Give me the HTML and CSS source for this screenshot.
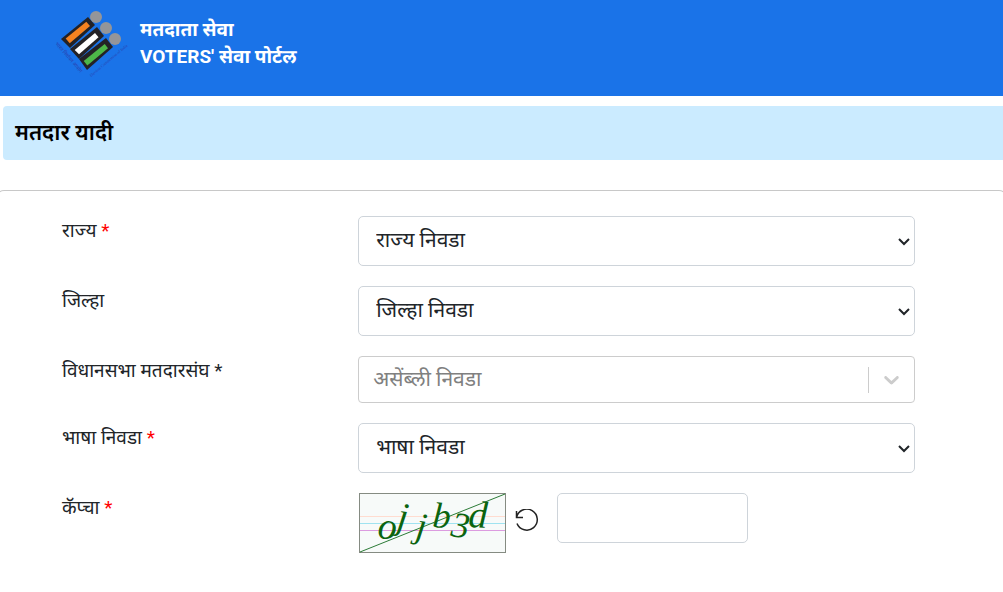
FILE: index.html
```
<!DOCTYPE html>
<html lang="mr">
<head>
  <meta charset="UTF-8" />
  <meta name="viewport" content="width=device-width, initial-scale=1.0"/>
  <title>मतदार यादी</title>
  <link rel="stylesheet" href="styles.css">
</head>
<body>
  <header class="header">
    <svg class="logo" viewBox="0 0 75 72" aria-hidden="true">
      <g fill="#949599">
        <circle cx="42" cy="9" r="6"/>
        <circle cx="52" cy="20" r="6"/>
        <circle cx="61" cy="31" r="6"/>
      </g>
      <g fill="#242226">
        <path d="M7 31 34 9 41 17 16 40Z"/>
        <path d="M16 41 43 19 50 28 25 51Z"/>
        <path d="M25 51 52 30 59 39 33 62Z"/>
      </g>
      <path fill="#f58220" d="M11.700 30.500 32.300 13.700 36 18 15.700 35.300Z"/>
      <path fill="#ffffff" d="M20.700 42 41 25 44.500 29.300 25 46.300Z"/>
      <path fill="#4db748" d="M29.700 53 50.700 36 54 40.300 33.300 57.500Z"/>
      <g class="logo-text">
        <text class="logo-hindi" transform="translate(1 36) rotate(49)">भारत निर्वाचन आयोग</text>
        <text transform="translate(37 69) rotate(-40)">Election Commission of India</text>
      </g>
    </svg>
    <div class="brand">
      <div>मतदाता सेवा</div>
      <div>VOTERS' सेवा पोर्टल</div>
    </div>
  </header>

  <h1 class="page-title">मतदार यादी</h1>

  <form class="panel">
    <div class="row">
      <label for="state">राज्य <span class="required">*</span></label>
      <select class="control" id="state"><option>राज्य निवडा</option></select>
    </div>
    <div class="row">
      <label for="district">जिल्हा</label>
      <select class="control" id="district"><option>जिल्हा निवडा</option></select>
    </div>
    <div class="row">
      <label for="assembly">विधानसभा मतदारसंघ *</label>
      <div class="combo">
        <input class="combo-input" type="text" id="assembly" placeholder="असेंब्ली निवडा">
        <button class="combo-toggle" type="button" aria-label="असेंब्ली निवडा">
          <svg width="25" height="25" viewBox="0 0 20 20"><path d="M4.516 7.548c0.436-0.446 1.043-0.481 1.576 0l3.908 3.747 3.908-3.747c0.533-0.481 1.141-0.446 1.574 0 0.436 0.445 0.408 1.197 0 1.615-0.406 0.418-4.695 4.502-4.695 4.502-0.217 0.223-0.502 0.335-0.787 0.335s-0.57-0.112-0.789-0.335c0 0-4.287-4.084-4.695-4.502s-0.436-1.17 0-1.615z"/></svg>
        </button>
      </div>
    </div>
    <div class="row">
      <label for="language">भाषा निवडा <span class="required">*</span></label>
      <select class="control" id="language"><option>भाषा निवडा</option></select>
    </div>
    <div class="row">
      <label for="captcha">कॅप्चा <span class="required">*</span></label>
      <div class="captcha">
        <svg class="captcha-image" viewBox="0 0 147 60" role="img" aria-label="captcha">
          <rect x=".5" y=".5" width="146" height="59" fill="#f7faf9" stroke="#858b82"/>
          <path d="M1 23.500H146" stroke="#ffdcd0"/>
          <path d="M1 30.500H146" stroke="#9fe3f0"/>
          <path d="M1 37.500H146" stroke="#dc9be0"/>
          <path d="M1 59 146 1" stroke="#2b7a36"/>
          <g class="captcha-text">
            <text class="captcha-big" transform="translate(18 45) rotate(5)">o</text>
            <text class="captcha-big" transform="translate(37 35) rotate(8)">j</text>
            <text transform="translate(56 44) rotate(8)">j</text>
            <text transform="translate(73 34) rotate(4)">b</text>
            <text transform="translate(91 43) rotate(8)">3</text>
            <text class="captcha-big" transform="translate(109 34) rotate(3)">d</text>
          </g>
        </svg>
        <button class="refresh" type="button" aria-label="Refresh captcha">
          <svg width="24" height="24" viewBox="0 0 24 24"><path d="M1.500 2V8.500H8M1.500 8.500A10.500 10.500 0 1 1 2 14.500"/></svg>
        </button>
        <input class="control captcha-input" type="text" id="captcha">
      </div>
    </div>
  </form>
</body>
</html>
```
FILE: styles.css
```
* {
  box-sizing: border-box;
}
body {
  margin: 0;
  font-family: Roboto, "Noto Sans Devanagari", "Noto Sans", sans-serif;
  background: #fff;
  color: #212529;
  overflow-x: hidden;
}
.header {
  display: flex;
  align-items: flex-start;
  gap: 11px;
  min-height: 96px;
  padding: 8px 54px;
  background: #1a73e8;
}
.logo {
  width: 75px;
  height: 72px;
  overflow: visible;
}
.logo-text {
  font-family: "Liberation Serif", "Noto Sans Devanagari", serif;
  font-size: 4px;
  fill: #2b3fae;
}
.logo-hindi {
  font-size: 5px;
}
.brand {
  padding-top: 8px;
  color: #fff;
  font-size: 19px;
  font-weight: 700;
  line-height: 27px;
}
.page-title {
  margin: 10px 0 30px 3px;
  padding: 12px;
  border-radius: 4px 0 0 4px;
  background: #cbebff;
  color: #000;
  font-size: 22px;
  font-weight: 600;
  line-height: 30px;
}
.panel {
  display: flex;
  flex-direction: column;
  gap: 20px;
  margin: 0 -4px;
  padding: 25px 91px 39px 65px;
  border: 1px solid #c8c8c8;
  border-bottom: 0;
  border-radius: 8px 8px 0 0;
}
.row {
  display: grid;
  grid-template-columns: 25fr 47fr;
  align-items: start;
}
label {
  font-size: 19px;
  line-height: 30px;
}
.required {
  color: #f00;
}
.control {
  width: 100%;
  height: 50px;
  padding: 6px 17px 8px;
  border: 1px solid #ced4da;
  border-radius: 5px;
  background: #fff;
  color: #212529;
  font-family: inherit;
  font-size: 21px;
}
select.control {
  appearance: none;
  background: #fff url("data:image/svg+xml,%3Csvg xmlns='http://www.w3.org/2000/svg' width='12' height='10'%3E%3Cpath d='M1 3l5 5 5-5' fill='none' stroke='%23212529' stroke-width='2'/%3E%3C/svg%3E") no-repeat right 4px center;
}
.combo {
  display: flex;
  align-items: center;
  height: 47px;
  border: 1px solid #ccc;
  border-radius: 4px;
}
.combo-input {
  flex: 1;
  min-width: 0;
  padding: 0 14px 2px;
  border: 0;
  background: none;
  font-family: inherit;
  font-size: 21px;
}
.combo-input::placeholder {
  color: #808080;
}
.combo-toggle {
  display: flex;
  align-items: center;
  justify-content: center;
  width: 46px;
  height: 26px;
  padding: 0;
  border: 0;
  border-left: 1px solid #ccc;
  background: none;
  fill: #ccc;
}
.captcha {
  display: flex;
  align-items: flex-start;
}
.captcha-image {
  width: 147px;
  height: 60px;
  margin-left: 1px;
}
.captcha-text {
  font-family: "Liberation Serif", serif;
  font-size: 36px;
  font-style: italic;
  fill: #0b640f;
}
.captcha-big {
  font-size: 38px;
}
.refresh {
  margin: 16px 18px 0 9px;
  padding: 0;
  border: 0;
  background: none;
}
.refresh svg {
  display: block;
  fill: none;
  stroke: #222;
  stroke-width: 1.500;
}
.captcha-input {
  width: 191px;
}
```
